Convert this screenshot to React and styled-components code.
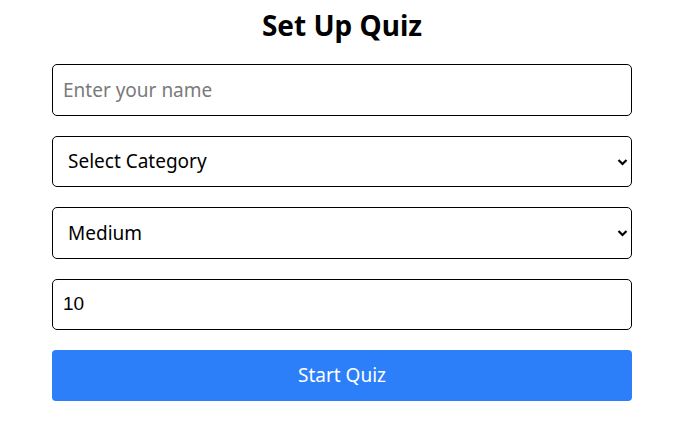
import React, { useState } from "react";
import styled, { createGlobalStyle } from "styled-components";

const GlobalStyle = createGlobalStyle`
  body {
    margin: 0;
    background: #fff;
    font-family: "Noto Sans", "Open Sans", sans-serif;
  }
`;

const Page = styled.div`
  width: 580px;
  margin-left: 52px;
  padding-top: 4px;
  display: flex;
  flex-direction: column;
  gap: 20px;
`;

const Title = styled.h1`
  margin: 0;
  height: 40px;
  line-height: 42px;
  text-align: center;
  font-size: 28px;
  font-weight: 700;
  color: #000;
`;

const Field = styled.input`
  box-sizing: border-box;
  width: 100%;
  height: 51.5px;
  padding: 0 10px;
  border: 1px solid #000;
  border-radius: 5px;
  font-family: ${(p) => (p.type === "number" ? '"Liberation Sans", Arial, sans-serif' : '"Noto Sans", sans-serif')};
  font-size: 19px;
  color: #000;
  background: #fff;
  outline: none;
  &::placeholder {
    color: #7a7a7a;
  }
  &::-webkit-inner-spin-button,
  &::-webkit-outer-spin-button {
    -webkit-appearance: none;
    margin: 0;
  }
`;

const SelectWrap = styled.div`
  position: relative;
  height: 51.5px;
`;

const Select = styled.select`
  box-sizing: border-box;
  width: 100%;
  height: 51.5px;
  padding: 0 30px 0 15px;
  border: 1px solid #000;
  border-radius: 5px;
  font-family: "Noto Sans", sans-serif;
  font-size: 19px;
  color: #000;
  background: #fff;
  appearance: none;
  outline: none;
`;

const Chevron = styled.svg`
  position: absolute;
  right: 4px;
  top: 22px;
  pointer-events: none;
`;

const StartButton = styled.button`
  height: 50.5px;
  border: none;
  border-radius: 4px;
  background: #2d7ff9;
  color: #fff;
  font-family: "Noto Sans", sans-serif;
  font-size: 19px;
  cursor: pointer;
`;

function Dropdown({ value, onChange, children }) {
  return (
    <SelectWrap>
      <Select value={value} onChange={onChange}>
        {children}
      </Select>
      <Chevron width="11" height="8" viewBox="0 0 11 8">
        <path d="M1.5 2 L5.5 6 L9.5 2" fill="none" stroke="#000" strokeWidth="2.2" />
      </Chevron>
    </SelectWrap>
  );
}

function App() {
  const [name, setName] = useState("");
  const [category, setCategory] = useState("");
  const [difficulty, setDifficulty] = useState("medium");
  const [amount, setAmount] = useState(10);

  return (
    <>
      <GlobalStyle />
      <Page>
        <Title>Set Up Quiz</Title>
        <Field placeholder="Enter your name" value={name} onChange={(e) => setName(e.target.value)} />
        <Dropdown value={category} onChange={(e) => setCategory(e.target.value)}>
          <option value="">Select Category</option>
          <option value="9">General Knowledge</option>
          <option value="21">Sports</option>
        </Dropdown>
        <Dropdown value={difficulty} onChange={(e) => setDifficulty(e.target.value)}>
          <option value="easy">Easy</option>
          <option value="medium">Medium</option>
          <option value="hard">Hard</option>
        </Dropdown>
        <Field type="number" value={amount} onChange={(e) => setAmount(e.target.value)} />
        <StartButton>Start Quiz</StartButton>
      </Page>
    </>
  );
}

export default App;
